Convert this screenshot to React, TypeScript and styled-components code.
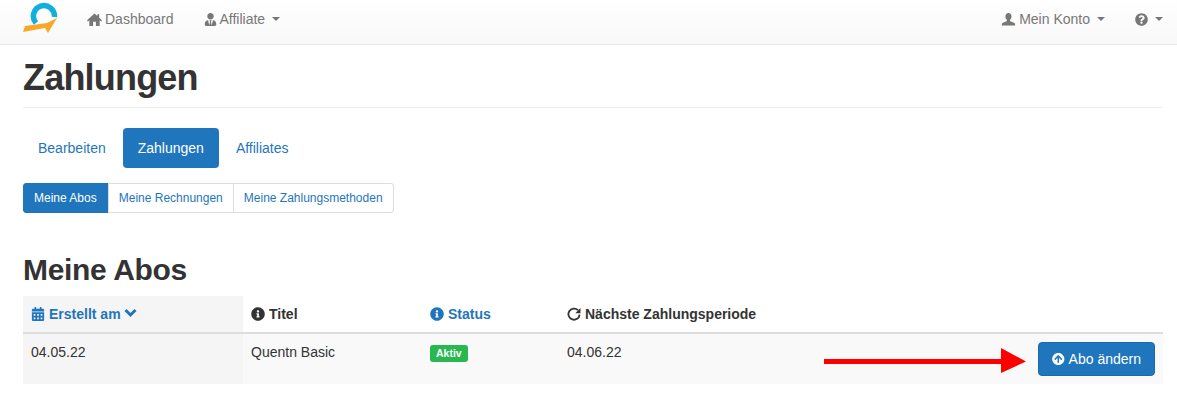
import React from 'react';
import styled, { createGlobalStyle } from 'styled-components';
import {
  FaArrowCircleUp,
  FaCalendarAlt,
  FaInfoCircle,
  FaQuestionCircle,
  FaUserTie,
} from 'react-icons/fa';

const GlobalStyle = createGlobalStyle`
  html, body {
    margin: 0;
    background: #fff;
  }

  body {
    font-family: "Liberation Sans", Arial, sans-serif;
    font-size: 14px;
    line-height: 20px;
    color: #333;
  }

  * {
    box-sizing: border-box;
  }
`;

const Page = styled.div`
  width: 1177px;
  height: 418px;
  overflow: hidden;
`;

const Navbar = styled.nav`
  display: flex;
  align-items: center;
  height: 45px;
  padding: 0 14px 0 23px;
  background: linear-gradient(to bottom, #ffffff 0%, #f8f8f8 100%);
  border-bottom: 1px solid #e7e7e7;
`;

const Logo = styled.svg`
  display: block;
  align-self: flex-start;
  width: 36px;
  height: 36px;
  margin: 2px 28px 0 0;
  flex: none;
`;

const NavItem = styled.a<{ $gap?: number }>`
  display: flex;
  align-items: center;
  gap: 3px;
  margin-right: ${({ $gap }) => $gap ?? 0}px;
  padding-bottom: 6px;
  color: #777;
  white-space: nowrap;

  svg {
    flex: none;
  }
`;

const NavIcon = styled.svg`
  width: 15px;
  height: 15px;
  fill: #777;
`;

const Caret = styled.span`
  display: inline-block;
  width: 0;
  height: 0;
  margin-left: 4px;
  border-top: 4px solid #777;
  border-left: 4px solid transparent;
  border-right: 4px solid transparent;
`;

const Spacer = styled.div`
  flex: 1;
`;

const Content = styled.main`
  padding: 0 14px 0 23px;
`;

const PageHeader = styled.div`
  padding: 13px 0 9px;
  border-bottom: 1px solid #eee;
`;

const Title = styled.h1`
  margin: 0;
  font-size: 36px;
  line-height: 40px;
  font-weight: 700;
  letter-spacing: -0.8px;
`;

const Pills = styled.div`
  display: flex;
  gap: 2px;
  margin-top: 20px;
`;

const Pill = styled.a<{ $active?: boolean }>`
  display: block;
  padding: 10px 15px;
  border-radius: 4px;
  color: ${({ $active }) => ($active ? '#fff' : '#1f76bc')};
  background: ${({ $active }) => ($active ? '#1f76bc' : 'transparent')};
`;

const SubTabs = styled.div`
  display: inline-flex;
  margin-top: 15px;
`;

const SubTab = styled.a<{ $active?: boolean }>`
  display: block;
  height: 30px;
  padding: 5px ${({ $active }) => ($active ? '11px' : '10px')} 5px 10px;
  margin-left: -1px;
  font-size: 12px;
  line-height: 18px;
  border: 1px solid ${({ $active }) => ($active ? '#1f76bc' : '#ddd')};
  color: ${({ $active }) => ($active ? '#fff' : '#1f76bc')};
  background: ${({ $active }) => ($active ? '#1f76bc' : '#fff')};

  &:first-child {
    margin-left: 0;
    border-radius: 3px 0 0 3px;
  }

  &:last-child {
    border-radius: 0 3px 3px 0;
  }
`;

const SectionTitle = styled.h2`
  margin: 40px 0 10px;
  font-size: 30px;
  line-height: 33px;
  font-weight: 700;
  letter-spacing: -0.35px;
`;

const Table = styled.div`
  position: relative;
  display: grid;
  grid-template-columns: 220px 179px 137px 1fr auto;
  width: 1140px;
`;

const HeadCell = styled.div<{ $sorted?: boolean; $link?: boolean }>`
  display: flex;
  align-items: center;
  gap: 4px;
  height: 38px;
  padding: 0 8px;
  border-bottom: 2px solid #ddd;
  font-weight: 700;
  color: ${({ $link }) => ($link ? '#1f76bc' : '#333')};
  background: ${({ $sorted }) => ($sorted ? '#f5f5f5' : '#fff')};
  white-space: nowrap;
`;

const Chevron = styled.svg`
  width: 13px;
  height: 10px;
  margin-left: -1px;
  margin-bottom: 2px;
  fill: none;
  stroke: currentColor;
  stroke-width: 3;
`;

const RefreshIcon = styled.svg`
  width: 14px;
  height: 14px;
  fill: #333;
`;

const Cell = styled.div<{ $sorted?: boolean }>`
  height: 50px;
  padding: 8px;
  background: ${({ $sorted }) => ($sorted ? '#f5f5f5' : '#f9f9f9')};
`;

const Badge = styled.span`
  display: inline-block;
  height: 17px;
  margin-top: 3px;
  padding: 0 6px;
  border-radius: 3px;
  background: #28b84f;
  color: #fff;
  font-size: 10.5px;
  line-height: 17px;
  font-weight: 700;
  vertical-align: top;
`;

const Button = styled.a`
  display: flex;
  align-items: center;
  gap: 4px;
  width: 117px;
  height: 34px;
  padding: 0 13px;
  border: 1px solid #1a6aa9;
  border-radius: 4px;
  background: #1f76bc;
  color: #fff;
  white-space: nowrap;
`;

const Arrow = styled.svg`
  position: absolute;
  left: 801px;
  top: 51px;
  width: 204px;
  height: 28px;
`;

const App = () => (
  <Page>
    <GlobalStyle />
    <Navbar>
      <Logo viewBox="0 0 36 36">
        <path
          d="M13 21 A10.5 10.5 0 1 1 31.4 15"
          fill="none"
          stroke="#12aee0"
          strokeWidth="5.5"
        />
        <path d="M0 30 L2 24 L24 21 L34 16 L25 31 L22 26 Z" fill="#f9a72b" />
      </Logo>
      <NavItem $gap={30}>
        <NavIcon viewBox="0 0 16 16">
          <path d="M8 1.5 L11 4.2 V2.5 H13 V6 L16 8.8 L15 10 L13.5 8.7 V15 H9.5 V10.5 H6.5 V15 H2.5 V8.7 L1 10 L0 8.8 Z" />
        </NavIcon>
        Dashboard
      </NavItem>
      <NavItem>
        <FaUserTie size={13} />
        Affiliate
        <Caret />
      </NavItem>
      <Spacer />
      <NavItem $gap={30}>
        <NavIcon viewBox="0 0 16 16">
          <path d="M8 1c2 0 3.2 1.5 3.2 3.6 0 1.7-.8 3.2-1.6 4 0 .8.2 1.2 1 1.6 1.6.7 3.8 1.4 4.4 2.4v1.9H.9v-1.9c.6-1 2.8-1.7 4.4-2.4.8-.4 1-.8 1-1.6-.8-.8-1.6-2.3-1.6-4C4.8 2.5 6 1 8 1z" />
        </NavIcon>
        Mein Konto
        <Caret />
      </NavItem>
      <NavItem>
        <FaQuestionCircle size={13} />
        <Caret />
      </NavItem>
    </Navbar>
    <Content>
      <PageHeader>
        <Title>Zahlungen</Title>
      </PageHeader>
      <Pills>
        <Pill>Bearbeiten</Pill>
        <Pill $active>Zahlungen</Pill>
        <Pill>Affiliates</Pill>
      </Pills>
      <SubTabs>
        <SubTab $active>Meine Abos</SubTab>
        <SubTab>Meine Rechnungen</SubTab>
        <SubTab>Meine Zahlungsmethoden</SubTab>
      </SubTabs>
      <SectionTitle>Meine Abos</SectionTitle>
      <Table>
        <HeadCell $sorted $link>
          <FaCalendarAlt size={14} />
          Erstellt am
          <Chevron viewBox="0 0 13 10">
            <path d="M1.5 2 L6.5 7 L11.5 2" />
          </Chevron>
        </HeadCell>
        <HeadCell>
          <FaInfoCircle size={14} />
          Titel
        </HeadCell>
        <HeadCell $link>
          <FaInfoCircle size={14} />
          Status
        </HeadCell>
        <HeadCell>
          <RefreshIcon viewBox="0 0 14 14">
            <path
              d="M11 3.2 A5.6 5.6 0 1 0 12.6 7.6"
              fill="none"
              stroke="#333"
              strokeWidth="1.8"
            />
            <path d="M13.5 1 V6.2 H8.3 Z" />
          </RefreshIcon>
          Nächste Zahlungsperiode
        </HeadCell>
        <HeadCell />
        <Cell $sorted>04.05.22</Cell>
        <Cell>Quentn Basic</Cell>
        <Cell>
          <Badge>Aktiv</Badge>
        </Cell>
        <Cell>04.06.22</Cell>
        <Cell>
          <Button>
            <FaArrowCircleUp size={14} />
            Abo ändern
          </Button>
        </Cell>
        <Arrow viewBox="0 0 204 28">
          <rect x="0" y="12" width="180" height="5" fill="#ff0000" />
          <path d="M177 1 L202 14.5 L177 26 Z" fill="#ff0000" />
        </Arrow>
      </Table>
    </Content>
  </Page>
);

export default App;
